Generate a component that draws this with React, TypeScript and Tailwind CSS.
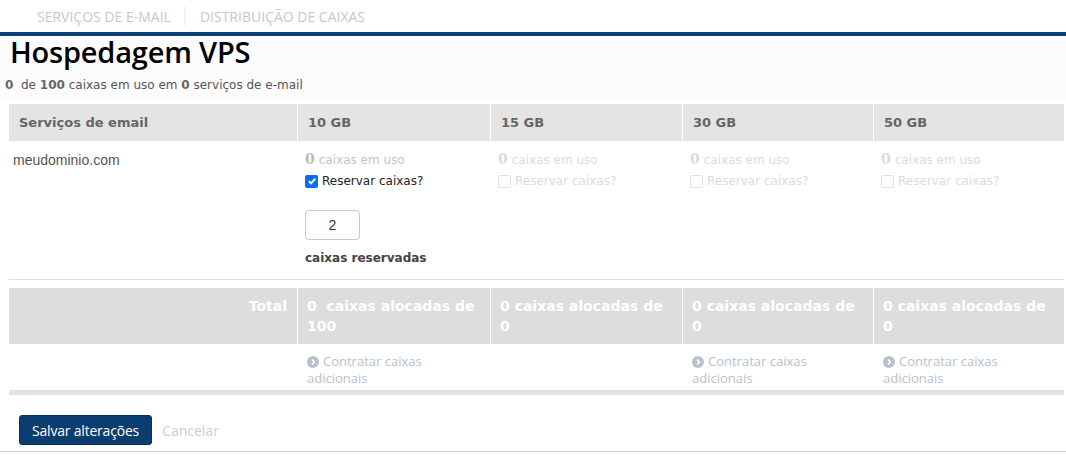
import React from "react";

const cols = ["10 GB", "15 GB", "30 GB", "50 GB"];

function Chevron() {
  return (
    <svg width="12" height="12" viewBox="0 0 12 12" className="inline-block mr-[4px] -mt-[2px] align-middle">
      <circle cx="6" cy="6" r="6" fill="#b7c2ce" />
      <path d="M5 3.6 L7.4 6 L5 8.4" stroke="#fff" strokeWidth="1.6" fill="none" />
    </svg>
  );
}

function Checkbox({ checked, disabled }: { checked?: boolean; disabled?: boolean }) {
  if (checked)
    return (
      <span className="inline-flex w-[13px] h-[13px] rounded-[2px] bg-[#0b6ee8] items-center justify-center mr-[4px]">
        <svg width="10" height="10" viewBox="0 0 10 10">
          <path d="M1.8 5.2 L4 7.4 L8.3 2.6" stroke="#fff" strokeWidth="1.8" fill="none" />
        </svg>
      </span>
    );
  return (
    <span
      className={`inline-block w-[13px] h-[13px] rounded-[2px] border mr-[4px] ${disabled ? "border-[#e2e2e2]" : "border-[#888]"}`}
    />
  );
}

export default function App() {
  const verdana = { fontFamily: '"DejaVu Sans", Verdana, sans-serif' };
  const ubuntu = { fontFamily: '"Open Sans", "Noto Sans", sans-serif' };
  return (
    <div className="w-[1066px] h-[455px] bg-white overflow-hidden relative">
      {/* Top nav */}
      <div className="h-[32px] flex items-center text-[14px] text-[#c8c8c8]" style={ubuntu}>
        <span className="pl-[37px] pr-[13px]">SERVIÇOS DE E-MAIL</span>
        <span className="h-[18px] border-l border-dotted border-[#e2e2e2]" />
        <span className="pl-[15px]">DISTRIBUIÇÃO DE CAIXAS</span>
      </div>
      <div className="h-[4px] bg-[#0b4179]" />
      <div className="bg-[#fcfcfc] h-[63px]">
        <h1
          className="pl-[10px] pt-[0px] text-[29px] leading-[32px] font-semibold text-black tracking-[-0.2px]"
          style={ubuntu}
        >
          Hospedagem VPS
        </h1>
        <div className="pl-[5px] pt-[10px] text-[12px] leading-[14px] text-[#555]" style={verdana}>
          <b className="text-[#666]">0</b> &nbsp;de <b className="text-[#666]">100</b> caixas em uso em{" "}
          <b className="text-[#666]">0</b> serviços de e-mail
        </div>
      </div>

      {/* Table */}
      <div className="ml-[9px] mr-[2px] mt-[5px]">
        <div className="grid grid-cols-[288px_193px_192px_191px_191px] h-[37px] bg-[#e4e4e4]">
          <div className="flex items-center pl-[10px] text-[13px] font-bold text-[#666]" style={verdana}>
            Serviços de email
          </div>
          {cols.map((c) => (
            <div
              key={c}
              className="flex items-center pl-[10px] text-[13px] font-bold text-[#666] border-l border-white"
              style={verdana}
            >
              {c}
            </div>
          ))}
        </div>
        <div className="grid grid-cols-[288px_193px_192px_191px_191px] h-[139px] border-b border-[#dedede]">
          <div className="pl-[4px] pt-[9px] text-[14px] text-[#555]" style={{ fontFamily: '"Liberation Sans", Arial, sans-serif' }}>
            meudominio.com
          </div>
          {cols.map((c, i) => {
            const active = i === 0;
            return (
              <div key={c} className="pl-[8px] pt-[10px]">
                <div className="text-[12px] leading-[16px]" style={verdana}>
                  <span
                    className={`font-bold text-[14px] mr-[4px] ${active ? "text-[#bbb]" : "text-[#dcdcdc]"}`}
                    style={{ fontFamily: '"DejaVu Serif", Georgia, serif' }}
                  >
                    0
                  </span>
                  <span className={active ? "text-[#c4c4c4]" : "text-[#dcdcdc]"}>caixas em uso</span>
                </div>
                <div className="flex items-center mt-[6px] text-[12px] leading-[14px]" style={verdana}>
                  <Checkbox checked={active} disabled={!active} />
                  <span className={active ? "text-[#222]" : "text-[#dcdcdc]"}>Reservar caixas?</span>
                </div>
                {active && (
                  <>
                    <div
                      className="mt-[22px] w-[55px] h-[30px] border border-[#c8c8c8] rounded-[4px] flex items-center justify-center text-[14px] text-[#333]"
                      style={{ fontFamily: '"Liberation Sans", Arial, sans-serif' }}
                    >
                      2
                    </div>
                    <div className="mt-[9px] text-[12px] font-bold text-[#444]" style={verdana}>
                      caixas reservadas
                    </div>
                  </>
                )}
              </div>
            );
          })}
        </div>
        <div className="grid grid-cols-[288px_193px_192px_191px_191px] mt-[8px] h-[56px] bg-[#dddddd]">
          <div className="text-right pr-[10px] pt-[8px] text-[14px] leading-[20px] font-bold text-white" style={verdana}>
            Total
          </div>
          {["100", "0", "0", "0"].map((n, i) => (
            <div
              key={i}
              className="border-l border-white pl-[9px] pr-[12px] pt-[8px] text-[14px] leading-[20px] font-bold text-white"
              style={verdana}
            >
              0 {i === 0 ? "\u00a0" : ""}caixas alocadas de {n}
            </div>
          ))}
        </div>
        <div className="grid grid-cols-[288px_193px_192px_191px_191px] h-[51px] border-b-[5px] border-[#e2e2e2]">
          <div />
          {[true, false, true, true].map((show, i) => (
            <div key={i} className="pl-[10px] pt-[9px] text-[13px] leading-[17px] text-[#b7c2ce]" style={ubuntu}>
              {show && (
                <>
                  <Chevron />
                  Contratar caixas
                  <br />
                  adicionais
                </>
              )}
            </div>
          ))}
        </div>
      </div>

      {/* Buttons */}
      <div className="flex items-center pl-[19px] mt-[20px]">
        <button
          className="h-[30px] px-[12px] bg-[#0b3d70] rounded-[3px] text-white text-[14px] border border-[#07305a] tracking-[-0.2px]"
          style={ubuntu}
        >
          Salvar alterações
        </button>
        <span className="ml-[10px] text-[14px] text-[#c5d0dc]" style={ubuntu}>
          Cancelar
        </span>
      </div>
      <div className="absolute left-0 right-0 top-[451px] h-px bg-[#cfcfcf]" />
    </div>
  );
}
